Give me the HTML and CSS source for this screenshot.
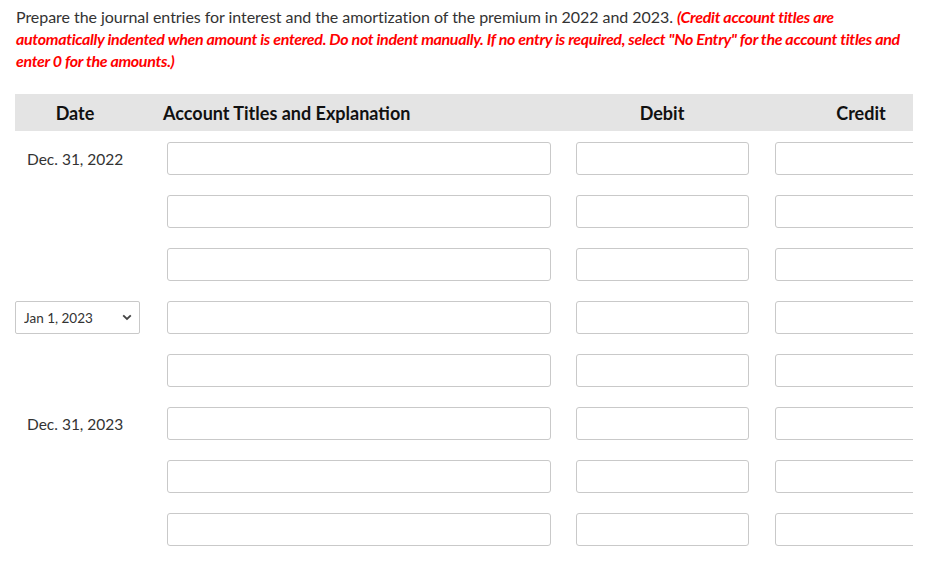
FILE: index.html
```html
<!DOCTYPE html>
<html>
<head>
<meta charset="utf-8">
<link rel="stylesheet" href="styles.css">
</head>
<body>
<div class="page">
  <p class="intro">Prepare the journal entries for interest and the amortization of the premium in 2022 and 2023. <em class="note">(Credit account titles are automatically indented when amount is entered. Do not indent manually. If no entry is required, select "No Entry" for the account titles and enter 0 for the amounts.)</em></p>

  <div class="journal">
    <div class="head">
      <div class="h-date">Date</div>
      <div class="h-acct">Account Titles and Explanation</div>
      <div class="h-debit">Debit</div>
      <div class="h-credit">Credit</div>
    </div>

    <div class="rows">
      <div class="row">
        <div class="date">Dec. 31, 2022</div>
        <div class="acct"><input class="field" type="text"></div>
        <div class="debit"><input class="field" type="text"></div>
        <div class="credit"><input class="field" type="text"></div>
      </div>
      <div class="row">
        <div class="date"></div>
        <div class="acct"><input class="field" type="text"></div>
        <div class="debit"><input class="field" type="text"></div>
        <div class="credit"><input class="field" type="text"></div>
      </div>
      <div class="row">
        <div class="date"></div>
        <div class="acct"><input class="field" type="text"></div>
        <div class="debit"><input class="field" type="text"></div>
        <div class="credit"><input class="field" type="text"></div>
      </div>
      <div class="row">
        <div class="date date-select">
          <div class="select-wrap">
            <select class="select"><option>Jan 1, 2023</option></select>
            <svg class="chev" width="10" height="7" viewBox="0 0 10 7"><path d="M1.2 1.3 L5 5 L8.8 1.3" fill="none" stroke="#444" stroke-width="1.8"/></svg>
          </div>
        </div>
        <div class="acct"><input class="field" type="text"></div>
        <div class="debit"><input class="field" type="text"></div>
        <div class="credit"><input class="field" type="text"></div>
      </div>
      <div class="row">
        <div class="date"></div>
        <div class="acct"><input class="field" type="text"></div>
        <div class="debit"><input class="field" type="text"></div>
        <div class="credit"><input class="field" type="text"></div>
      </div>
      <div class="row">
        <div class="date">Dec. 31, 2023</div>
        <div class="acct"><input class="field" type="text"></div>
        <div class="debit"><input class="field" type="text"></div>
        <div class="credit"><input class="field" type="text"></div>
      </div>
      <div class="row">
        <div class="date"></div>
        <div class="acct"><input class="field" type="text"></div>
        <div class="debit"><input class="field" type="text"></div>
        <div class="credit"><input class="field" type="text"></div>
      </div>
      <div class="row">
        <div class="date"></div>
        <div class="acct"><input class="field" type="text"></div>
        <div class="debit"><input class="field" type="text"></div>
        <div class="credit"><input class="field" type="text"></div>
      </div>
    </div>
  </div>
</div>
</body>
</html>
```

FILE: styles.css
```css
html, body {
  margin: 0;
  padding: 0;
  background: #fff;
}
body {
  font-family: Lato, "Open Sans", Arial, sans-serif;
  color: #333;
}
.page {
  padding: 6px 17px 0 15px;
}
.intro {
  margin: 0;
  font-size: 16px;
  line-height: 22px;
  color: #333;
  padding-left: 1px;
  letter-spacing: -0.05px;
}
.note {
  color: #f00;
  font-weight: bold;
  font-style: italic;
  letter-spacing: -0.32px;
}
.journal {
  margin-top: 22px;
  width: 898px;
  overflow: hidden;
}
.head {
  display: grid;
  grid-template-columns: 137px 410px 200px 151px;
  height: 37px;
  align-items: center;
  background: #e4e4e4;
  font-weight: bold;
  font-size: 18px;
  color: #111;
}
.h-date {
  text-align: center;
  padding-right: 17px;
}
.h-acct {
  padding-left: 11px;
  white-space: nowrap;
}
.h-debit {
  padding-left: 14px;
  width: 172px;
  text-align: center;
}
.h-credit {
  padding-left: 13px;
  width: 172px;
  text-align: center;
}
.rows {
  display: flex;
  flex-direction: column;
  gap: 20px;
  padding-top: 11px;
}
.row {
  display: grid;
  grid-template-columns: 137px 410px 200px 151px;
  align-items: center;
}
.date {
  font-size: 15.5px;
  color: #333;
  padding-left: 12px;
  height: 33px;
  display: flex;
  align-items: center;
}
.date-select {
  padding-left: 0;
}
.acct {
  padding-left: 15px;
}
.debit {
  padding-left: 14px;
}
.credit {
  padding-left: 13px;
}
.field {
  display: block;
  box-sizing: border-box;
  height: 33px;
  margin: 0;
  border: 1px solid #c9c9c9;
  border-radius: 3px;
  background: #fff;
  outline: none;
}
.acct .field { width: 384px; }
.debit .field { width: 173px; }
.credit .field { width: 173px; }
.select-wrap {
  position: relative;
  width: 125px;
  height: 33px;
}
.select {
  appearance: none;
  -webkit-appearance: none;
  box-sizing: border-box;
  width: 125px;
  height: 33px;
  margin: 0;
  padding: 0 0 0 8px;
  border: 1px solid #c9c9c9;
  border-radius: 2px;
  background: #fff;
  font-family: Lato, "Open Sans", Arial, sans-serif;
  font-size: 13.5px;
  color: #333;
  outline: none;
}
.chev {
  position: absolute;
  right: 8px;
  top: 13px;
  pointer-events: none;
}
```
